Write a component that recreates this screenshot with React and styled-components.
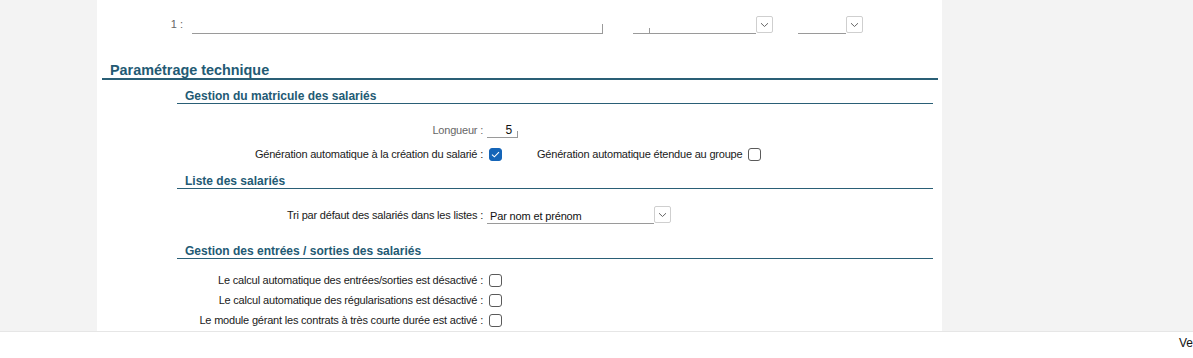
import React from "react";
import styled, { createGlobalStyle } from "styled-components";

const Global = createGlobalStyle`
  html, body { margin: 0; padding: 0; background: #fff; }
  body { font-family: "Liberation Sans", Arial, sans-serif; font-size: 11px; color: #222; }
  #root { width: 1193px; height: 358px; overflow: hidden; }
`;

const Page = styled.div`
  display: flex;
  flex-direction: column;
  width: 1193px;
  height: 358px;
`;

const Main = styled.div`
  display: flex;
  height: 331px;
  overflow: hidden;
`;

const Gutter = styled.div`
  background: #f3f3f3;
  width: ${(p) => p.$w || "auto"};
  flex: ${(p) => (p.$grow ? 1 : "none")};
`;

const Panel = styled.div`
  width: 845px;
  background: #fff;
  display: flex;
  flex-direction: column;
`;

const Footer = styled.div`
  flex: 1;
  border-top: 1px solid #e6e6e6;
  display: flex;
  justify-content: flex-end;
  white-space: nowrap;
  font-size: 12px;
  color: #111;
  line-height: 22px;
`;

const TopRow = styled.div`
  display: flex;
  align-items: flex-end;
  height: 20px;
  margin-top: 14px;
`;

const SmallLabel = styled.span`
  color: #666;
  width: ${(p) => p.$w}px;
  text-align: right;
  flex: none;
  line-height: 14px;
  margin-bottom: ${(p) => p.$mb || 0}px;
`;

const LineInput = styled.div`
  position: relative;
  width: ${(p) => p.$w}px;
  height: ${(p) => p.$h || 10}px;
  margin-left: ${(p) => p.$ml || 0}px;
  border-bottom: 1px solid #9a9a9a;
  border-right: ${(p) => (p.$tick ? "1px solid #9a9a9a" : "none")};
  flex: none;
  box-sizing: border-box;
  display: flex;
  align-items: flex-end;
  padding: 0 3px 1px;
  font-size: 11px;
  letter-spacing: -0.15px;
  color: #111;
`;

const Caret = styled.span`
  position: absolute;
  left: ${(p) => p.$x}px;
  bottom: 0;
  width: 1px;
  height: 5px;
  background: #9a9a9a;
`;

const Digit = styled.span`
  position: absolute;
  right: 5px;
  bottom: 0;
  font-size: 12px;
`;

const DropBtn = styled.div`
  width: 17px;
  height: 17px;
  box-sizing: border-box;
  border: 1px solid #cfcfcf;
  border-radius: 2px;
  flex: none;
  display: flex;
  align-items: center;
  justify-content: center;
  margin-bottom: 1px;
`;

const Chevron = () => (
  <svg width="9" height="6" viewBox="0 0 9 6">
    <path d="M1 1.2 L4.5 4.5 L8 1.2" fill="none" stroke="#666" strokeWidth="1" />
  </svg>
);

const Heading = styled.div`
  margin-left: ${(p) => (p.$sub ? 80 : 5)}px;
  width: ${(p) => (p.$sub ? 756 : 836)}px;
  margin-top: ${(p) => p.$mt}px;
  padding-left: 8px;
  box-sizing: border-box;
  font-weight: bold;
  font-size: ${(p) => (p.$sub ? 12 : 14.4)}px;
  line-height: ${(p) => (p.$sub ? 14 : 16)}px;
  color: #235a74;
  border-bottom: ${(p) => (p.$sub ? "1px" : "2px")} solid #2a5f76;
`;

const FormRow = styled.div`
  display: flex;
  align-items: center;
  height: ${(p) => p.$h || 20}px;
  margin-top: ${(p) => p.$mt || 0}px;
`;

const Label = styled.span`
  width: 386px;
  flex: none;
  text-align: right;
  color: ${(p) => (p.$muted ? "#666" : "#1a1a1a")};
  white-space: nowrap;
  letter-spacing: -0.2px;
`;

const InlineLabel = styled.span`
  margin-left: ${(p) => p.$ml}px;
  white-space: nowrap;
  color: #1a1a1a;
  letter-spacing: -0.2px;
`;

const Box = styled.span`
  width: 13px;
  height: 13px;
  box-sizing: border-box;
  border-radius: 3px;
  border: 1px solid ${(p) => (p.$on ? "#1565b8" : "#5a5a5a")};
  background: ${(p) => (p.$on ? "#1565b8" : "#fff")};
  margin-left: ${(p) => p.$ml}px;
  flex: none;
  display: flex;
  align-items: center;
  justify-content: center;
`;

const Check = ({ on, ml = 6 }) => (
  <Box $on={on} $ml={ml}>
    {on && (
      <svg width="9" height="7" viewBox="0 0 9 7">
        <path d="M1 3.6 L3.4 5.8 L8 1.2" fill="none" stroke="#fff" strokeWidth="1.1" />
      </svg>
    )}
  </Box>
);

const Select = styled.div`
  display: flex;
  align-items: flex-end;
  margin-left: 4px;
`;

const SmallField = styled(LineInput)`
  align-self: flex-end;
  margin-bottom: 1px;
`;

export default function App() {
  return (
    <Page>
      <Global />
      <Main>
        <Gutter $w="97px" />
        <Panel>
          <TopRow>
            <SmallLabel $w={86} $mb={3}>1 :</SmallLabel>
            <LineInput $w={411} $ml={9} $tick />
            <LineInput $w={123} $ml={30}>
              <Caret $x={16} />
            </LineInput>
            <DropBtn><Chevron /></DropBtn>
            <LineInput $w={48} $ml={25} />
            <DropBtn><Chevron /></DropBtn>
          </TopRow>

          <Heading $mt={28}>Paramétrage technique</Heading>

          <Heading $sub $mt={9}>Gestion du matricule des salariés</Heading>
          <FormRow $h={18} $mt={17}>
            <Label $muted>Longueur :</Label>
            <SmallField $w={31} $h={7} $ml={4} $tick>
              <Digit>5</Digit>
            </SmallField>
          </FormRow>
          <FormRow $h={18} $mt={6}>
            <Label>Génération automatique à la création du salarié :</Label>
            <Check on />
            <InlineLabel $ml={35}>Génération automatique étendue au groupe</InlineLabel>
            <Check />
          </FormRow>

          <Heading $sub $mt={11}>Liste des salariés</Heading>
          <FormRow $h={20} $mt={16}>
            <Label>Tri par défaut des salariés dans les listes :</Label>
            <Select>
              <LineInput $w={167} $h={18}>Par nom et prénom</LineInput>
              <DropBtn><Chevron /></DropBtn>
            </Select>
          </FormRow>

          <Heading $sub $mt={19}>Gestion des entrées / sorties des salariés</Heading>
          <FormRow $mt={11}>
            <Label>Le calcul automatique des entrées/sorties est désactivé :</Label>
            <Check />
          </FormRow>
          <FormRow>
            <Label>Le calcul automatique des régularisations est désactivé :</Label>
            <Check />
          </FormRow>
          <FormRow>
            <Label>Le module gérant les contrats à très courte durée est activé :</Label>
            <Check />
          </FormRow>
        </Panel>
        <Gutter $grow />
      </Main>
      <Footer>Ve</Footer>
    </Page>
  );
}
